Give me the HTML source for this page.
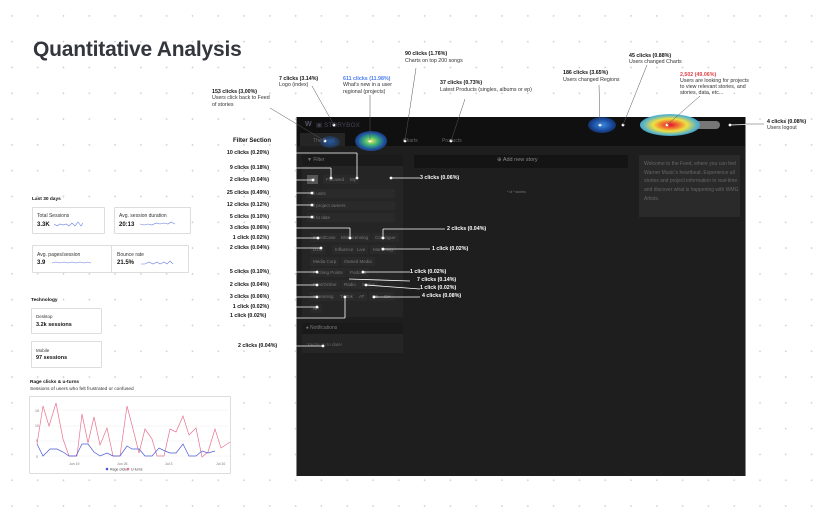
<!DOCTYPE html>
<html><head><meta charset="utf-8"><style>
*{margin:0;padding:0;box-sizing:border-box}
body{width:821px;height:528px;overflow:hidden;position:relative;background:#fff;font-family:"Liberation Sans",sans-serif;color:#222;
background-image:radial-gradient(circle,#cfcfcf 0.7px,transparent 1px);background-size:25.8px 25.8px;background-position:-1px 3px}
.a{position:absolute;white-space:nowrap}
.b{font-weight:bold;font-size:5.3px;color:#111}
.t{font-size:5.3px;color:#333;line-height:6.5px}
.card{position:absolute;background:#fff;border:1px solid #ddd;border-radius:1px}
.d{position:absolute;background:#1e1e1e}
.tag{position:absolute;background:#2a2a2a;color:#777;font-size:4.5px;padding:1px 3px;height:9px;line-height:7px}
.lbl{position:absolute;font-weight:bold;font-size:5.3px;color:#111;white-space:nowrap;text-align:right}
</style></head><body>
<div class="a" style="left:33px;top:38px;font-size:21px;font-weight:bold;color:#34363d;letter-spacing:-0.2px">Quantitative Analysis</div>

<div class="a b" style="left:32px;top:197px;font-size:4.8px">Last 30 days</div>
<div class="card" style="left:32px;top:207px;width:73px;height:27px"></div>
<div class="a t" style="left:37px;top:213px;font-size:5px">Total Sessions</div>
<div class="a b" style="left:37px;top:222px;font-size:6px">3.3K</div>
<div class="card" style="left:114px;top:207px;width:77px;height:27px"></div>
<div class="a t" style="left:119px;top:213px;font-size:5px">Avg. session duration</div>
<div class="a b" style="left:119px;top:222px;font-size:6px">20:13</div>
<div class="card" style="left:32px;top:245px;width:80px;height:28px"></div>
<div class="a t" style="left:37px;top:252px;font-size:5px">Avg. pages/session</div>
<div class="a b" style="left:37px;top:260px;font-size:6px">3.9</div>
<div class="card" style="left:111px;top:245px;width:78px;height:28px"></div>
<div class="a t" style="left:117px;top:252px;font-size:5px">Bounce rate</div>
<div class="a b" style="left:117px;top:260px;font-size:6px">21.5%</div>
<svg class="a" style="left:0;top:0" width="240" height="280">
<g fill="none" stroke="#6b7fe0" stroke-width="0.6">
<path d="M54 224 l3 2 3-2 3 1 3-1 3 2 3-3 3 3 3-4 3 4 2-3"/>
<path d="M140 224 l4 1 4-1 4 1 4-2 4 1 4-1 4 1 3-2 4 2"/>
<path d="M52 263 l4 -1 4 1 4-1 4 1 4 -1 4 1 4-1 4 1 4-1 3 1"/>
<path d="M141 264 l4 0 4-2 4 2 4-2 3 2 4-2 3 2 3-3 3 3"/>
</g></svg>
<div class="a b" style="left:31px;top:298px;font-size:4.8px">Technology</div>
<div class="card" style="left:31px;top:308px;width:71px;height:26px"></div>
<div class="a t" style="left:36px;top:314px;font-size:4.5px">Desktop</div>
<div class="a b" style="left:36px;top:322px;font-size:5.5px">3.2k sessions</div>
<div class="card" style="left:31px;top:341px;width:71px;height:27px"></div>
<div class="a t" style="left:36px;top:348px;font-size:4.5px">Mobile</div>
<div class="a b" style="left:36px;top:355px;font-size:5.5px">97 sessions</div>

<div class="a b" style="left:30px;top:380px;font-size:4.8px">Rage clicks &amp; u-turns</div>
<div class="a t" style="left:30px;top:387px;font-size:4.8px">Sessions of users who felt frustrated or confused</div>
<div class="card" style="left:29px;top:396px;width:202px;height:78px"></div>
<svg class="a" style="left:29px;top:396px" width="202" height="78">
<g stroke="#eee" stroke-width="0.5"><line x1="10" y1="14" x2="200" y2="14"/><line x1="10" y1="30" x2="200" y2="30"/><line x1="10" y1="45" x2="200" y2="45"/><line x1="10" y1="60" x2="200" y2="60"/></g>
<g font-size="3.5" fill="#777" font-family="Liberation Sans"><text x="6" y="16">15</text><text x="6" y="31">10</text><text x="7" y="46">5</text><text x="7" y="62">0</text>
<text x="40" y="69">Jun 19</text><text x="88" y="69">Jun 26</text><text x="136" y="69">Jul 3</text><text x="187" y="69">Jul 10</text></g>
<text x="-52" y="-4" transform="rotate(-90)" font-size="3.5" fill="#777" font-family="Liberation Sans">Sessions</text>
<path fill="none" stroke="#e8738f" stroke-width="0.7" d="M8 48 L14 10 L20 30 L27 7 L34 43 L40 60 L48 60 L53 18 L59 47 L65 21 L71 49 L78 32 L84 60 L91 60 L98 10 L103 29 L110 57 L116 33 L123 43 L128 60 L135 60 L141 33 L147 36 L154 20 L160 39 L167 32 L173 61 L179 56 L186 33 L192 52 L201 46"/>
<path fill="none" stroke="#4a5bd6" stroke-width="0.7" d="M8 48 L14 60 L21 53 L28 53 L34 56 L40 60 L47 60 L53 48 L59 48 L65 56 L71 60 L78 57 L84 60 L91 60 L98 50 L103 53 L110 53 L116 60 L123 60 L130 52 L136 55 L141 57 L147 57 L154 48 L160 60 L167 60 L173 55 L179 57 L186 55"/>
<circle cx="78" cy="73" r="1.3" fill="#4a5bd6"/><text x="81" y="74.5" font-size="3.5" fill="#444" font-family="Liberation Sans">Rage clicks</text>
<circle cx="99" cy="73" r="1.3" fill="#e8738f"/><text x="102" y="74.5" font-size="3.5" fill="#444" font-family="Liberation Sans">U-turns</text>
</svg>

<div class="d" style="left:296px;top:117px;width:450px;height:359px;border-left:1px solid #888;border-right:1px solid #888"></div>
<div class="d" style="left:297px;top:117px;width:448px;height:29px;background:#101010"></div>
<div class="d" style="left:300px;top:133px;width:45px;height:13px;background:#252525"></div>
<div class="a" style="left:305px;top:121px;font-size:7px;font-weight:bold;color:#556">W</div>
<div class="a" style="left:316px;top:121px;font-size:6.5px;color:#445">▣ STORYBOX</div>
<div class="a" style="left:313px;top:138px;font-size:5px;color:#666">The Feed</div>
<div class="a" style="left:403px;top:138px;font-size:5px;color:#666">Charts</div>
<div class="a" style="left:442px;top:138px;font-size:5px;color:#666">Products</div>
<div class="d" style="left:640px;top:121px;width:80px;height:8px;border-radius:4px;background:#777"></div>
<div class="a" style="left:355px;top:131px;width:32px;height:20px;border-radius:50%;background:radial-gradient(ellipse,#e6f04a 0%,#3fb37a 30%,#1d4fa0 60%,transparent 100%)"></div>
<div class="a" style="left:588px;top:117px;width:28px;height:16px;border-radius:50%;background:radial-gradient(ellipse,#3a8de0 0%,#1a4aa0 50%,transparent 100%)"></div>
<div class="a" style="left:640px;top:114px;width:60px;height:22px;border-radius:50%;background:radial-gradient(ellipse,#e01030 0%,#f07030 20%,#f0e040 40%,#50b0d0 65%,transparent 100%)"></div>
<div class="a" style="left:320px;top:136px;width:20px;height:12px;border-radius:50%;background:radial-gradient(ellipse,#2458a0 0%,transparent 100%)"></div>
<div class="d" style="left:302px;top:155px;width:101px;height:162px;background:#252525"></div>
<div class="d" style="left:302px;top:155px;width:101px;height:11px;background:#1a1a1a"></div>
<div class="a" style="left:307px;top:157px;font-size:5px;color:#777">▼ Filter</div>
<div class="tag" style="left:307px;top:175px;background:#555">All</div>
<div class="tag" style="left:323px;top:175px">Followed</div>
<div class="tag" style="left:347px;top:175px">My</div>
<div class="tag" style="left:307px;top:189px;width:88px">All units</div>
<div class="tag" style="left:307px;top:201px;width:88px">All project owners</div>
<div class="tag" style="left:307px;top:213px;width:88px">All to date</div>
<div class="tag" style="left:310px;top:233px">BrandCase</div><div class="tag" style="left:338px;top:233px">BM/Licensing</div><div class="tag" style="left:372px;top:233px">Catalogue</div>
<div class="tag" style="left:310px;top:245px">D1st</div><div class="tag" style="left:332px;top:245px">Influence</div><div class="tag" style="left:354px;top:245px">Live</div><div class="tag" style="left:370px;top:245px">Marketing</div>
<div class="tag" style="left:310px;top:257px">Media Corp</div><div class="tag" style="left:341px;top:257px">Owned Media</div>
<div class="tag" style="left:310px;top:268px">Pitching Points</div><div class="tag" style="left:347px;top:268px">Podcast</div>
<div class="tag" style="left:310px;top:280px">Print/Online</div><div class="tag" style="left:341px;top:280px">Radio</div><div class="tag" style="left:359px;top:280px">Series</div>
<div class="tag" style="left:310px;top:292px">Streaming</div><div class="tag" style="left:337px;top:292px">TikTok</div><div class="tag" style="left:356px;top:292px">AT</div><div class="tag" style="left:369px;top:292px">DE</div><div class="tag" style="left:381px;top:292px">CH</div>
<div class="tag" style="left:310px;top:304px">NP</div>
<div class="d" style="left:302px;top:323px;width:101px;height:30px;background:#252525"></div>
<div class="d" style="left:302px;top:323px;width:101px;height:11px;background:#1a1a1a"></div>
<div class="a" style="left:306px;top:325px;font-size:5px;color:#777">♠ Notifications</div>
<div class="a" style="left:307px;top:342px;font-size:4.5px;color:#666">You're up to date!</div>
<div class="d" style="left:414px;top:155px;width:214px;height:13px;background:#141414"></div>
<div class="a" style="left:497px;top:157px;font-size:5.5px;color:#888">⊕ Add new story</div>
<div class="a" style="left:507px;top:190px;font-size:3.5px;color:#777">* of * stories</div>
<div class="d" style="left:639px;top:155px;width:101px;height:62px;background:#2a2a2a"></div>
<div class="a" style="left:644px;top:160px;font-size:5px;line-height:8.7px;color:#666;white-space:normal;width:95px">Welcome to the Feed, where you can feel Warner Music's heartbeat. Experience all stories and project information in real-time and discover what is happening with WMG Artists.</div>

<svg class="a" style="left:0;top:0" width="821" height="528">
<g stroke="#fff" stroke-width="0.8" fill="#fff">
<line x1="270" y1="153" x2="357" y2="153"/><line x1="357" y1="153" x2="357" y2="178"/>
<line x1="270" y1="168" x2="331" y2="168"/><line x1="331" y1="168" x2="331" y2="178"/>
<line x1="270" y1="180" x2="313" y2="180"/>
<line x1="270" y1="193" x2="312" y2="193"/><line x1="270" y1="205" x2="312" y2="205"/><line x1="270" y1="217" x2="312" y2="217"/>
<line x1="270" y1="228" x2="350" y2="228"/><line x1="350" y1="228" x2="350" y2="238"/>
<line x1="270" y1="238" x2="318" y2="238"/><line x1="270" y1="248" x2="321" y2="248"/>
<line x1="270" y1="272" x2="317" y2="272"/><line x1="270" y1="285" x2="317" y2="285"/><line x1="270" y1="297" x2="317" y2="297"/><line x1="270" y1="307" x2="317" y2="307"/>
<line x1="270" y1="318" x2="345" y2="318"/><line x1="345" y1="318" x2="345" y2="297"/>
<line x1="280" y1="346" x2="323" y2="346"/>
<line x1="390" y1="178" x2="420" y2="178"/>
<line x1="383" y1="229" x2="445" y2="229"/><line x1="383" y1="229" x2="383" y2="238"/>
<line x1="383" y1="249" x2="430" y2="249"/><line x1="363" y1="272" x2="410" y2="272"/>
<line x1="349" y1="279" x2="410" y2="281"/><line x1="366" y1="285" x2="420" y2="289"/>
<line x1="374" y1="297" x2="420" y2="297"/>
<line x1="730" y1="125" x2="763" y2="124"/>
<circle cx="357" cy="178" r="1"/><circle cx="331" cy="178" r="1"/><circle cx="313" cy="180" r="1"/><circle cx="312" cy="193" r="1"/><circle cx="312" cy="205" r="1"/><circle cx="312" cy="217" r="1"/><circle cx="350" cy="238" r="1"/><circle cx="318" cy="238" r="1"/><circle cx="321" cy="248" r="1"/><circle cx="317" cy="272" r="1"/><circle cx="317" cy="285" r="1"/><circle cx="317" cy="297" r="1"/><circle cx="317" cy="307" r="1"/><circle cx="345" cy="297" r="1"/><circle cx="323" cy="346" r="1"/><circle cx="391" cy="178" r="1"/><circle cx="383" cy="238" r="1"/><circle cx="383" cy="249" r="1"/><circle cx="363" cy="272" r="1"/><circle cx="366" cy="285" r="1"/><circle cx="374" cy="297" r="1"/><circle cx="730" cy="125" r="1"/><circle cx="600" cy="125" r="1"/><circle cx="623" cy="125" r="1"/><circle cx="667" cy="125" r="1"/><circle cx="370" cy="141" r="1"/><circle cx="325" cy="141" r="1"/><circle cx="405" cy="141" r="1"/><circle cx="451" cy="141" r="1"/><circle cx="334" cy="125" r="1"/>
</g>
<g stroke="#555" stroke-width="0.5">
<line x1="270" y1="108" x2="325" y2="141"/><line x1="312" y1="86" x2="334" y2="125"/><line x1="370" y1="95" x2="370" y2="141"/>
<line x1="416" y1="68" x2="405" y2="141"/><line x1="465" y1="99" x2="451" y2="141"/><line x1="599" y1="85" x2="600" y2="125"/>
<line x1="647" y1="65" x2="623" y2="125"/><line x1="700" y1="96" x2="667" y2="125"/><line x1="746" y1="124" x2="764" y2="124"/>
</g></svg>

<div class="a b" style="left:212px;top:89px">153 clicks (3.00%)</div><div class="a t" style="left:212px;top:95px">Users click back to Feed<br>of stories</div>
<div class="a b" style="left:279px;top:76px">7 clicks (3.14%)</div><div class="a t" style="left:279px;top:82px">Logo (index)</div>
<div class="a b" style="left:343px;top:76px;color:#4a7cf0">611 clicks (11.98%)</div><div class="a t" style="left:343px;top:82px">What's new in a user<br>regional (projects)</div>
<div class="a b" style="left:405px;top:51px">90 clicks (1.76%)</div><div class="a t" style="left:405px;top:58px">Charts on top 200 songs</div>
<div class="a b" style="left:440px;top:80px">37 clicks (0.73%)</div><div class="a t" style="left:440px;top:87px">Latest Products (singles, albums or ep)</div>
<div class="a b" style="left:563px;top:70px">186 clicks (3.65%)</div><div class="a t" style="left:563px;top:77px">Users changed Regions</div>
<div class="a b" style="left:629px;top:53px">45 clicks (0.88%)</div><div class="a t" style="left:629px;top:59px">Users changed Charts</div>
<div class="a b" style="left:680px;top:72px;color:#e0424a">2,502 (49.06%)</div><div class="a t" style="left:680px;top:78px;line-height:6px">Users are looking for projects<br>to view relevant stories, and<br>stories, data, etc...</div>
<div class="a b" style="left:767px;top:119px">4 clicks (0.08%)</div><div class="a t" style="left:767px;top:125px">Users logout</div>

<div class="lbl" style="left:233px;top:138px;font-size:6px">Filter Section</div>
<div class="lbl" style="right:552px;top:150px">10 clicks (0.20%)</div>
<div class="lbl" style="right:552px;top:165px">9 clicks (0.18%)</div>
<div class="lbl" style="right:552px;top:177px">2 clicks (0.04%)</div>
<div class="lbl" style="right:552px;top:190px">25 clicks (0.49%)</div>
<div class="lbl" style="right:552px;top:202px">12 clicks (0.12%)</div>
<div class="lbl" style="right:552px;top:214px">5 clicks (0.10%)</div>
<div class="lbl" style="right:552px;top:225px">3 clicks (0.06%)</div>
<div class="lbl" style="right:552px;top:235px">1 click (0.02%)</div>
<div class="lbl" style="right:552px;top:245px">2 clicks (0.04%)</div>
<div class="lbl" style="right:552px;top:269px">5 clicks (0.10%)</div>
<div class="lbl" style="right:552px;top:282px">2 clicks (0.04%)</div>
<div class="lbl" style="right:552px;top:294px">3 clicks (0.06%)</div>
<div class="lbl" style="right:552px;top:304px">1 click (0.02%)</div>
<div class="lbl" style="left:230px;top:313px">1 click (0.02%)</div>
<div class="lbl" style="left:238px;top:343px">2 clicks (0.04%)</div>
<div class="lbl" style="left:420px;top:175px;color:#fff">3 clicks (0.06%)</div>
<div class="lbl" style="left:447px;top:226px;color:#fff">2 clicks (0.04%)</div>
<div class="lbl" style="left:432px;top:246px;color:#fff">1 click (0.02%)</div>
<div class="lbl" style="left:410px;top:269px;color:#fff">1 click (0.02%)</div>
<div class="lbl" style="left:417px;top:277px;color:#fff">7 clicks (0.14%)</div>
<div class="lbl" style="left:420px;top:285px;color:#fff">1 click (0.02%)</div>
<div class="lbl" style="left:422px;top:293px;color:#fff">4 clicks (0.08%)</div>
</body></html>
